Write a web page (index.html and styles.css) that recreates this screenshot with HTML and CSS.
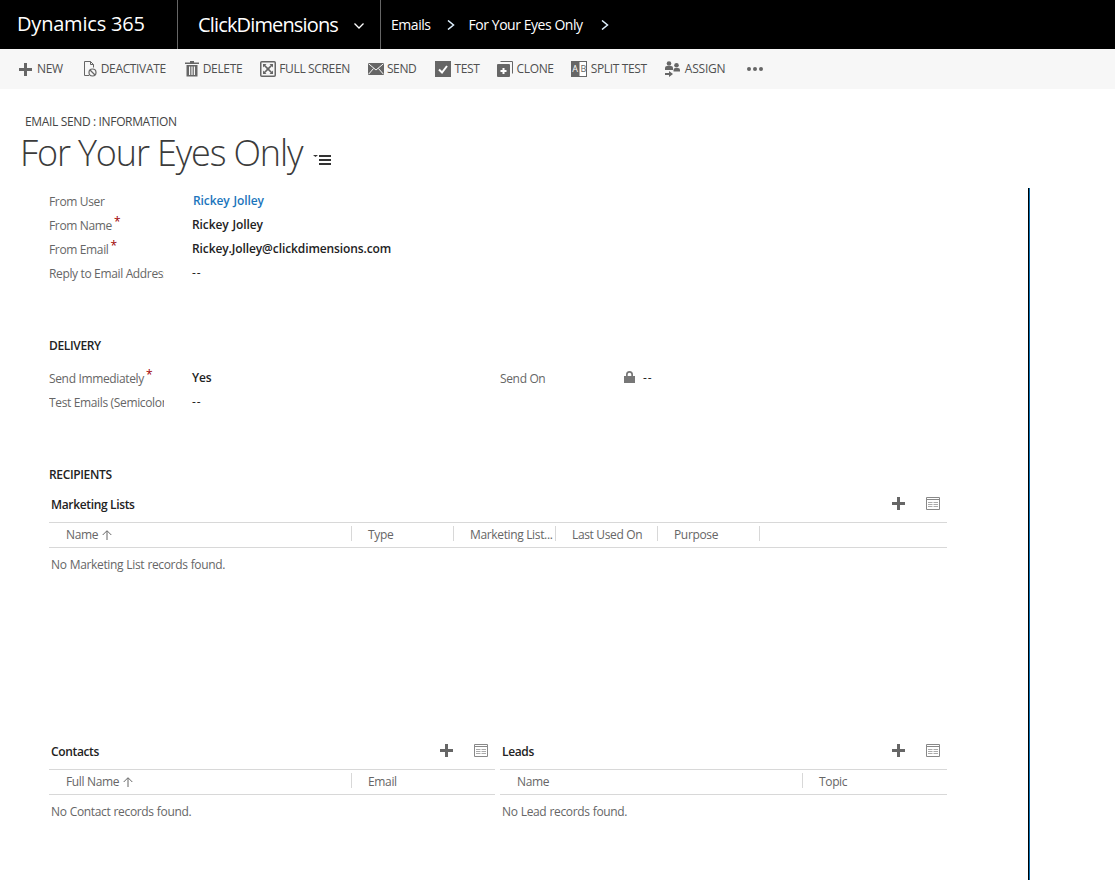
FILE: index.html
```html
<!DOCTYPE html>
<html lang="en">
<head>
    <meta charset="UTF-8">
    <title>For Your Eyes Only</title>
    <link rel="stylesheet" href="styles.css">
</head>
<body>
    <!-- Top navigation -->
    <header class="nav-bar">
        <div class="nav-brand">Dynamics 365</div>
        <div class="nav-app">
            <span>ClickDimensions</span>
            <svg class="nav-caret" width="10" height="6" viewBox="0 0 10 6"><path d="M.5.5 5 5 9.5.5" fill="none" stroke="#fff" stroke-width="1.3"/></svg>
        </div>
        <nav class="crumbs">
            <span class="crumb-first">Emails</span>
            <svg class="crumb-arrow" width="8" height="10" viewBox="0 0 8 10"><path d="M1 .5 6.5 5 1 9.5" fill="none" stroke="#dff1ff" stroke-width="1.5"/></svg>
            <span class="crumb-second">For Your Eyes Only</span>
            <svg class="crumb-arrow crumb-last" width="8" height="10" viewBox="0 0 8 10"><path d="M1 .5 6.5 5 1 9.5" fill="none" stroke="#dff1ff" stroke-width="1.5"/></svg>
        </nav>
    </header>

    <!-- Command bar -->
    <div class="command-bar">
        <div class="cmd cmd-new">
            <svg width="13" height="13" viewBox="0 0 13 13"><path d="M5 0h3v5h5v3H8v5H5V8H0V5h5z" fill="#666"/></svg>
            <span>NEW</span>
        </div>
        <div class="cmd cmd-deactivate">
            <svg width="14" height="16" viewBox="0 0 14 16"><path d="M6 14.500H1.500V.5h6l3 3v3M7.500.5v3h3" fill="none" stroke="#666"/><circle cx="9.500" cy="11.500" r="3.500" fill="#f7f7f7" stroke="#666" stroke-width="1.200"/><path d="M7 9l5 5" stroke="#666" stroke-width="1.200"/></svg>
            <span>DEACTIVATE</span>
        </div>
        <div class="cmd cmd-delete">
            <svg width="14" height="16" viewBox="0 0 14 16"><path d="M5 0h4v1.500h5V3H0V1.500h5z" fill="#666"/><path d="M1.500 4H12.500V15.500H1.500zM4 5.500V14h1.200V5.500zM6.400 5.500V14h1.200V5.500zM8.800 5.500V14H10V5.500z" fill="#666" fill-rule="evenodd"/></svg>
            <span>DELETE</span>
        </div>
        <div class="cmd cmd-full">
            <svg width="16" height="16" viewBox="0 0 16 16"><rect x=".75" y=".75" width="14.500" height="14.500" rx="1" fill="none" stroke="#666" stroke-width="1.500"/><path d="M3 3h3.500L5.300 4.200 8 6.800l2.700-2.600L9.500 3H13v3.500l-1.200-1.200L9.200 8l2.600 2.700 1.200-1.200V13H9.500l1.200-1.200L8 9.200l-2.700 2.600L6.500 13H3V9.500l1.200 1.200L6.800 8 4.200 5.300 3 6.500z" fill="#666"/></svg>
            <span>FULL SCREEN</span>
        </div>
        <div class="cmd cmd-send">
            <svg width="16" height="12" viewBox="0 0 16 12"><path d="M0 0h16v12H0z" fill="#666"/><path d="M.5.700 8 7 15.500.700M.5 11.300 5.500 5.500M15.500 11.300 10.500 5.500" fill="none" stroke="#f7f7f7"/></svg>
            <span>SEND</span>
        </div>
        <div class="cmd cmd-test">
            <svg width="16" height="16" viewBox="0 0 16 16"><rect width="16" height="16" fill="#666"/><path d="M4 8.500 7 11.500 12 5" fill="none" stroke="#fff" stroke-width="2"/></svg>
            <span>TEST</span>
        </div>
        <div class="cmd cmd-clone">
            <svg width="16" height="16" viewBox="0 0 16 16"><path d="M3.500.500h12v12" fill="none" stroke="#666"/><rect y="3" width="13" height="13" rx="1" fill="#666"/><path d="M5.500 7h2v2h2v2h-2v2h-2v-2h-2V9h2z" fill="#fff"/></svg>
            <span>CLONE</span>
        </div>
        <div class="cmd cmd-split">
            <svg width="16" height="16" viewBox="0 0 16 16"><rect width="8" height="16" fill="#666"/><rect x="8" y=".5" width="7.500" height="15" fill="#fff" stroke="#666"/><text class="ab-a" x="1.300" y="11">A</text><text class="ab-b" x="9.500" y="11">B</text></svg>
            <span>SPLIT TEST</span>
        </div>
        <div class="cmd cmd-assign">
            <svg width="16" height="16" viewBox="0 0 16 16"><circle cx="4" cy="2.500" r="2.300" fill="#666"/><path d="M0 9V7q0-2 2-2h4q2 0 2 2v2z" fill="#666"/><circle cx="11.500" cy="4.300" r="2.300" fill="#666"/><path d="M8.500 10.500V9q0-2 2-2H13q2 0 2 2v1.500z" fill="#666"/><path d="M0 12h4v-2l4 3-4 3v-2H0z" fill="#666"/></svg>
            <span>ASSIGN</span>
        </div>
        <div class="cmd-more"><i></i><i></i><i></i></div>
    </div>

    <!-- Form title -->
    <div class="form-head">
        <div class="form-type">EMAIL SEND : INFORMATION</div>
        <h1 class="form-title">For Your Eyes Only
            <svg class="title-menu" width="18" height="11" viewBox="0 0 18 11"><path d="M0 1h5L2.500 3z" fill="#333"/><path d="M6 1h12v2H6zM6 5h12v2H6zM6 9h12v2H6z" fill="#333"/></svg>
        </h1>
    </div>

    <main class="form-body">
        <div class="field-row">
            <div class="field-label">From User</div>
            <div class="field-value link">Rickey Jolley</div>
        </div>
        <div class="field-row">
            <div class="field-label">From Name<span class="req">*</span></div>
            <div class="field-value">Rickey Jolley</div>
        </div>
        <div class="field-row">
            <div class="field-label">From Email<span class="req">*</span></div>
            <div class="field-value">Rickey.Jolley@clickdimensions.com</div>
        </div>
        <div class="field-row">
            <div class="field-label">Reply to Email Address</div>
            <div class="field-value empty">--</div>
        </div>

        <h2 class="section-title section-delivery">DELIVERY</h2>
        <div class="two-col">
            <div class="field-row">
                <div class="field-label">Send Immediately<span class="req">*</span></div>
                <div class="field-value">Yes</div>
            </div>
            <div class="field-row">
                <div class="field-label label-send-on">Send On</div>
                <svg class="lock" width="11" height="12" viewBox="0 0 11 12"><path d="M2 5V3.500a3.500 3.500 0 0 1 7 0V5h2v7H0V5zM3.700 5h3.600V3.500a1.800 1.800 0 0 0-3.600 0z" fill="#777" fill-rule="evenodd"/></svg>
                <div class="field-value empty">--</div>
            </div>
            <div class="field-row">
                <div class="field-label">Test Emails (Semicolon separated)</div>
                <div class="field-value empty">--</div>
            </div>
        </div>

        <h2 class="section-title">RECIPIENTS</h2>

        <section class="grid grid-main">
            <div class="grid-head">
                <h3>Marketing Lists</h3>
                <svg class="grid-add" width="13" height="13" viewBox="0 0 13 13"><path d="M5 0h3v5h5v3H8v5H5V8H0V5h5z" fill="#666"/></svg>
                <svg class="grid-view" width="14" height="13" viewBox="0 0 14 13"><path d="M.5.500h13v12H.5zM.5 2.500h13" fill="none" stroke="#888"/><path d="M2 5.500h4.500M2 7.500h4.500M2 9.500h4.500M7.500 5.500H12M7.500 7.500H12M7.500 9.500H12" fill="none" stroke="#aaa"/></svg>
            </div>
            <div class="grid-cols">
                <div class="col col-first">Name <svg class="sort" width="10" height="10" viewBox="0 0 10 10"><path d="M5 10V1M.7 5 5 .7 9.300 5" fill="none" stroke="#666"/></svg></div>
                <div class="col col-std">Type</div>
                <div class="col col-std">Marketing List...</div>
                <div class="col col-std">Last Used On</div>
                <div class="col col-std">Purpose</div>
            </div>
            <div class="grid-empty">No Marketing List records found.</div>
        </section>

        <div class="grid-pair">
            <section class="grid">
                <div class="grid-head">
                    <h3>Contacts</h3>
                    <svg class="grid-add" width="13" height="13" viewBox="0 0 13 13"><path d="M5 0h3v5h5v3H8v5H5V8H0V5h5z" fill="#666"/></svg>
                    <svg class="grid-view" width="14" height="13" viewBox="0 0 14 13"><path d="M.5.500h13v12H.5zM.5 2.500h13" fill="none" stroke="#888"/><path d="M2 5.500h4.500M2 7.500h4.500M2 9.500h4.500M7.500 5.500H12M7.500 7.500H12M7.500 9.500H12" fill="none" stroke="#aaa"/></svg>
                </div>
                <div class="grid-cols">
                    <div class="col col-first">Full Name <svg class="sort" width="10" height="10" viewBox="0 0 10 10"><path d="M5 10V1M.7 5 5 .7 9.300 5" fill="none" stroke="#666"/></svg></div>
                    <div class="col">Email</div>
                </div>
                <div class="grid-empty">No Contact records found.</div>
            </section>
            <section class="grid">
                <div class="grid-head">
                    <h3>Leads</h3>
                    <svg class="grid-add" width="13" height="13" viewBox="0 0 13 13"><path d="M5 0h3v5h5v3H8v5H5V8H0V5h5z" fill="#666"/></svg>
                    <svg class="grid-view" width="14" height="13" viewBox="0 0 14 13"><path d="M.5.500h13v12H.5zM.5 2.500h13" fill="none" stroke="#888"/><path d="M2 5.500h4.500M2 7.500h4.500M2 9.500h4.500M7.500 5.500H12M7.500 7.500H12M7.500 9.500H12" fill="none" stroke="#aaa"/></svg>
                </div>
                <div class="grid-cols">
                    <div class="col col-first col-lead">Name</div>
                    <div class="col">Topic</div>
                </div>
                <div class="grid-empty">No Lead records found.</div>
            </section>
        </div>
    </main>
</body>
</html>
```

FILE: styles.css
```css
/* Global Reset */
* {
    margin: 0;
    padding: 0;
    box-sizing: border-box;
}

html, body {
    height: 880px;
    overflow: hidden;
}

body {
    font-family: 'Open Sans', 'Noto Sans', Arial, sans-serif;
    font-size: 12px;
    letter-spacing: -0.35px;
    color: #505050;
    background-color: #fff;
}

/* Top navigation */
.nav-bar {
    display: flex;
    height: 49px;
    background-color: #000;
    color: #fff;
}

.nav-brand {
    width: 178px;
    padding-left: 17px;
    border-right: 1px solid #666;
    font-size: 20px;
    line-height: 47px;
    letter-spacing: -0.2px;
}

.nav-app {
    display: flex;
    align-items: center;
    width: 203px;
    padding-left: 20px;
    border-right: 1px solid #666;
    font-size: 20px;
    letter-spacing: -0.85px;
}

.nav-caret {
    margin-left: 16px;
    margin-top: 3px;
}

.crumbs {
    display: flex;
    align-items: center;
    padding-left: 10px;
    font-size: 14px;
    letter-spacing: -0.45px;
}

.crumb-arrow {
    margin: 1px 0 0 16px;
}

.crumb-last {
    margin-left: 18px;
}

.crumb-second {
    margin-left: 14px;
}

/* Command bar */
.command-bar {
    display: flex;
    align-items: center;
    height: 40px;
    padding-left: 19px;
    background-color: #f7f7f7;
}

.cmd {
    display: flex;
    align-items: center;
    gap: 4px;
    margin-right: 18px;
    line-height: 16px;
    white-space: nowrap;
}

.cmd svg {
    flex: none;
}

.cmd-new {
    margin-right: 20px;
    gap: 5px;
}

.cmd-deactivate {
    margin-right: 19px;
}

.cmd-full {
    gap: 3px;
}

.cmd-send {
    gap: 3px;
    margin-right: 19px;
}

.cmd-test {
    gap: 3px;
    margin-right: 17px;
}

.cmd-clone {
    margin-right: 17px;
}

.cmd-assign span {
    letter-spacing: -0.2px;
}

.ab-a, .ab-b {
    font-size: 9px;
    letter-spacing: 0;
}

.ab-a {
    fill: #fff;
}

.ab-b {
    fill: #666;
}

.cmd-more {
    display: flex;
    gap: 2px;
    margin-left: 4px;
}

.cmd-more i {
    width: 4px;
    height: 4px;
    border-radius: 50%;
    background-color: #666;
}

/* Form title */
.form-head {
    height: 99px;
    padding: 25px 0 0 25px;
}

.form-type {
    line-height: 16px;
    color: #444;
}

.form-title {
    margin-left: -5px;
    font-size: 36px;
    font-weight: 300;
    line-height: 46px;
    letter-spacing: -1.15px;
    color: #3b3b3b;
    white-space: nowrap;
}

.title-menu {
    margin-left: 2px;
    vertical-align: 1px;
}

/* Form body */
.form-body {
    width: 1030px;
    height: 692px;
    padding-left: 49px;
    border-right: 1px solid #0a6fb0;
    box-shadow: inset -1px 0 0 #000;
}

.field-row {
    display: flex;
    align-items: center;
    height: 24px;
}

.field-label {
    width: 115px;
    margin-right: 28px;
    padding-top: 2px;
    overflow: hidden;
    white-space: nowrap;
    color: #666;
}

.req {
    position: relative;
    top: -4px;
    margin-left: 2px;
    color: #a00000;
    font-size: 12px;
}

.field-value {
    font-weight: 600;
    letter-spacing: -0.1px;
    word-spacing: 1px;
    color: #222;
}

.field-value.link {
    margin-left: 1px;
    color: #1b75bc;
}

.field-value.empty {
    font-weight: 400;
    letter-spacing: 1px;
}

.section-title {
    margin-top: 50px;
    font-size: 12px;
    font-weight: 600;
    line-height: 24px;
    color: #222;
}

.section-delivery + .two-col {
    margin-top: 7px;
}

.two-col {
    display: grid;
    grid-template-columns: 451px 451px;
}

.label-send-on {
    width: 124px;
    margin-right: 0;
}

.lock {
    margin-right: 8px;
}

/* Sub grids */
.grid {
    width: 898px;
}

.grid-main {
    height: 247px;
}

.grid-head {
    display: flex;
    align-items: center;
    height: 36px;
    padding-left: 2px;
    border-bottom: 1px solid #d8d8d8;
}

.grid-head h3 {
    flex: 1;
    font-size: 12px;
    font-weight: 600;
    color: #222;
}

.grid-add {
    margin: 0 21px 2px 0;
}

.grid-view {
    margin: 0 7px 2px 0;
}

.grid-cols {
    display: flex;
    height: 25px;
    border-bottom: 1px solid #d8d8d8;
    color: #666;
}

.col {
    padding-left: 16px;
    line-height: 23px;
    white-space: nowrap;
}

.col-first {
    width: 303px;
    padding-left: 17px;
    position: relative;
}

.col-lead {
    width: 303px;
}

.col-first::after, .col-std::after {
    content: "";
    position: absolute;
    top: 3px;
    right: 0;
    width: 1px;
    height: 15px;
    background-color: #d8d8d8;
}

.col-std {
    position: relative;
    width: 102px;
    overflow: hidden;
}

.sort {
    margin-left: 1px;
    vertical-align: -1px;
}

.grid-empty {
    padding: 8px 0 0 2px;
    line-height: 18px;
    word-spacing: 0.4px;
    color: #666;
}

.grid-pair {
    display: grid;
    grid-template-columns: 446px 447px;
    gap: 5px;
}

.grid-pair .grid {
    width: auto;
}
```
